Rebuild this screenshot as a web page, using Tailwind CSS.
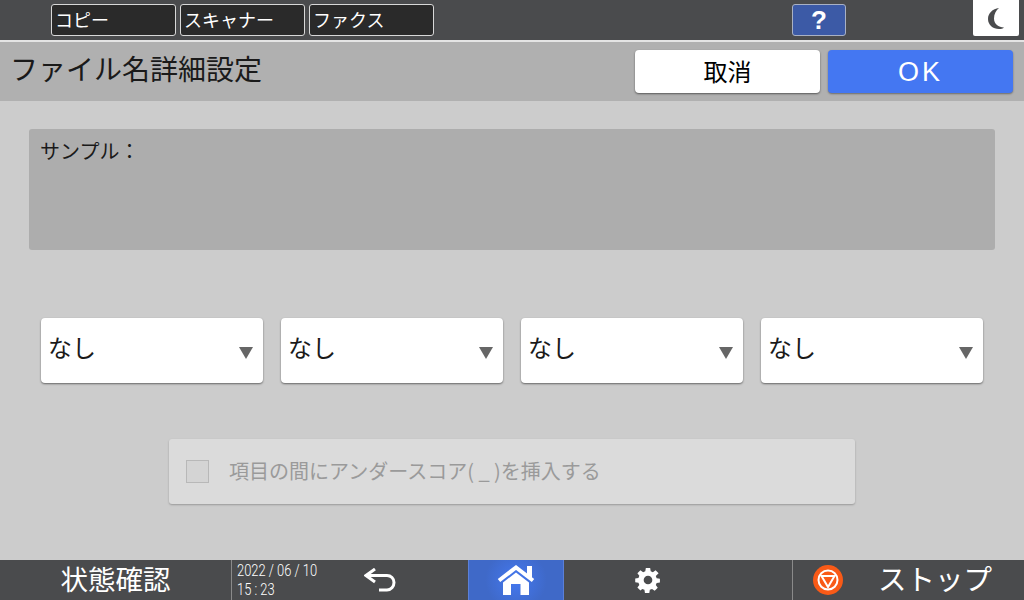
<!DOCTYPE html>
<html lang="ja">
<head>
<meta charset="UTF-8">
<title>ファイル名詳細設定</title>
<script src="https://cdn.jsdelivr.net/npm/@tailwindcss/browser@4"></script>
</head>
<body class="bg-[#cccccc]">
<div class="w-[1024px] h-[600px] flex flex-col overflow-hidden font-['Noto_Sans_CJK_JP','Noto_Sans',sans-serif] text-black">

  <!-- top tabs -->
  <div class="h-[42px] bg-[#4a4b4d] border-b-2 border-[#e4e4e4] flex items-start pt-1 pl-[51px] shrink-0">
    <div class="w-[125px] h-[32px] mr-1 bg-[#2a2a2a] border border-[#d8d8d8] rounded-[3px] text-white text-[18px] leading-[28px] pl-[3px]">コピー</div>
    <div class="w-[125px] h-[32px] mr-1 bg-[#2a2a2a] border border-[#d8d8d8] rounded-[3px] text-white text-[18px] leading-[28px] pl-[3px]">スキャナー</div>
    <div class="w-[125px] h-[32px] bg-[#2a2a2a] border border-[#d8d8d8] rounded-[3px] text-white text-[18px] leading-[28px] pl-[3px]">ファクス</div>
    <div class="ml-[358px] w-[54px] h-[32px] bg-[#3c5aa6] border border-[#a9b1c4] rounded-[3px] text-white text-[26px] leading-[30px] text-center font-['Liberation_Sans',sans-serif] font-bold">?</div>
    <div class="ml-[127px] -mt-1 w-[46px] h-[36px] bg-white rounded-b-[2px] flex items-center justify-center">
      <svg width="16" height="21" viewBox="0 0 16 21"><path d="M11 0C4.500 1 0 5 0 11s5 10 11 10c2 0 4-.5 5-1.500-5.500 0-10-3.500-10-9C6 6 8 2.500 11 0z" fill="#4a4b4d"/></svg>
    </div>
  </div>

  <!-- title bar -->
  <div class="h-[59px] bg-[#b0b0b0] flex items-start pt-2 shrink-0">
    <div class="ml-[10px] w-[625px] text-[28px] leading-[36px] text-[#1a1a1a]">ファイル名詳細設定</div>
    <div class="w-[185px] h-[43px] bg-white rounded-[4px] shadow-[0_1px_2px_rgba(0,0,0,0.5)] text-[24px] leading-[42px] text-center">取消</div>
    <div class="ml-2 w-[185px] h-[43px] bg-[#4477f2] rounded-[4px] shadow-[0_1px_2px_rgba(0,0,0,0.4)] text-white text-[27px] leading-[45px] text-center tracking-[3px] font-['Liberation_Sans',sans-serif]">OK</div>
  </div>

  <!-- content -->
  <div class="flex-1 flex flex-col">
    <div class="mt-[28px] ml-[29px] w-[966px] h-[121px] bg-[#adadad] rounded-[3px] pl-[11px] pt-[8px] text-[20px] leading-[28px] text-[#1a1a1a]">サンプル：</div>

    <div class="mt-[68px] ml-[41px] flex gap-[18px]">
      <div class="w-[222px] h-[65px] bg-white rounded-[4px] shadow-[0_1px_2px_rgba(0,0,0,0.5)] flex items-center justify-between pl-[7px] pr-[10px]">
        <span class="text-[24px] leading-[57px] mb-2 text-[#1a1a1a]">なし</span>
        <svg width="14" height="12" viewBox="0 0 14 12" class="mt-1"><path d="M0 0h14L7 12z" fill="#666666"/></svg>
      </div>
      <div class="w-[222px] h-[65px] bg-white rounded-[4px] shadow-[0_1px_2px_rgba(0,0,0,0.5)] flex items-center justify-between pl-[7px] pr-[10px]">
        <span class="text-[24px] leading-[57px] mb-2 text-[#1a1a1a]">なし</span>
        <svg width="14" height="12" viewBox="0 0 14 12" class="mt-1"><path d="M0 0h14L7 12z" fill="#666666"/></svg>
      </div>
      <div class="w-[222px] h-[65px] bg-white rounded-[4px] shadow-[0_1px_2px_rgba(0,0,0,0.5)] flex items-center justify-between pl-[7px] pr-[10px]">
        <span class="text-[24px] leading-[57px] mb-2 text-[#1a1a1a]">なし</span>
        <svg width="14" height="12" viewBox="0 0 14 12" class="mt-1"><path d="M0 0h14L7 12z" fill="#666666"/></svg>
      </div>
      <div class="w-[222px] h-[65px] bg-white rounded-[4px] shadow-[0_1px_2px_rgba(0,0,0,0.5)] flex items-center justify-between pl-[7px] pr-[10px]">
        <span class="text-[24px] leading-[57px] mb-2 text-[#1a1a1a]">なし</span>
        <svg width="14" height="12" viewBox="0 0 14 12" class="mt-1"><path d="M0 0h14L7 12z" fill="#666666"/></svg>
      </div>
    </div>

    <div class="mt-[56px] ml-[169px] w-[686px] h-[65px] bg-[#dbdbdb] rounded-[3px] shadow-[0_1px_2px_rgba(0,0,0,0.25)] flex items-center pl-[17px]">
      <div class="w-[23px] h-[23px] bg-[#d4d4d4] border border-[#b8b8b8]"></div>
      <span class="ml-5 mb-[2px] text-[20px] leading-[28px] text-[#9a9a9a]">項目の間にアンダースコア( _ )を挿入する</span>
    </div>
  </div>

  <!-- bottom bar -->
  <div class="h-10 bg-[#4a4b4d] flex items-stretch text-white shrink-0">
    <div class="w-[231px] text-[27.500px] leading-[36px] text-center">状態確認</div>
    <div class="w-[105px] border-l border-[#8a8a8a] pl-[5px] pt-[1px] text-[17px] leading-[19px] font-['Roboto',sans-serif] font-light">
      <div class="whitespace-nowrap scale-x-[0.76] origin-left">2022 / 06 / 10</div>
      <div class="scale-x-[0.76] origin-left">15 : 23</div>
    </div>
    <div class="w-[88px] flex items-center justify-center">
      <svg width="32" height="24" viewBox="0 0 32 24" fill="none" stroke="white" stroke-width="3"><path d="M3 7.500h20c4 0 7 3 7 7s-3 7.500-7 7.500h-8"/><path d="M11 1L2 7.500 11 14"/></svg>
    </div>
    <div class="ml-[44px] w-[96px] bg-[radial-gradient(circle,#4478f0_0%,#3f69c8_60%)] border-x border-[#5b80d8] flex items-center justify-center">
      <svg width="38" height="30" viewBox="0 0 38 30"><path d="M2 15.500L19 2.500l17 13" fill="none" stroke="white" stroke-width="4"/><path d="M30 1h5v12h-5z" fill="white"/><path fill-rule="evenodd" d="M19 7.500L6 17.500V30h26V17.500zM14 19h9.500v11H14z" fill="white"/></svg>
    </div>
    <div class="w-[229px] flex items-center pl-[71px] border-r border-[#8a8a8a]">
      <svg width="26" height="26" viewBox="0 0 24 24" fill="white"><path fill-rule="evenodd" d="M10 1h4l.5 3 2 .8 2.500-1.800 2.800 2.800L19.200 8.300l.8 2 3 .5v3.400l-3 .5-.8 2 1.800 2.500-2.800 2.800-2.500-1.800-2 .8-.5 3h-4l-.5-3-2-.8L5 21.800 2.200 19l1.800-2.500-.8-2-3-.5v-3.400l3-.5.8-2L2.200 5.800 5 3l2.500 1.800 2-.8zM12 8a4 4 0 100 8 4 4 0 000-8z"/></svg>
    </div>
    <div class="flex-1 flex items-center pl-5">
      <svg width="30" height="30" viewBox="0 0 30 30"><circle cx="15" cy="15" r="15" fill="#f95a17"/><circle cx="15" cy="15" r="9.500" fill="none" stroke="white" stroke-width="2"/><path d="M8.500 11h13L15 22z" fill="none" stroke="white" stroke-width="2"/></svg>
      <span class="ml-[35px] text-[28.500px] leading-[36px] -mt-1 whitespace-nowrap">ストップ</span>
    </div>
  </div>
</div>
</body>
</html>
